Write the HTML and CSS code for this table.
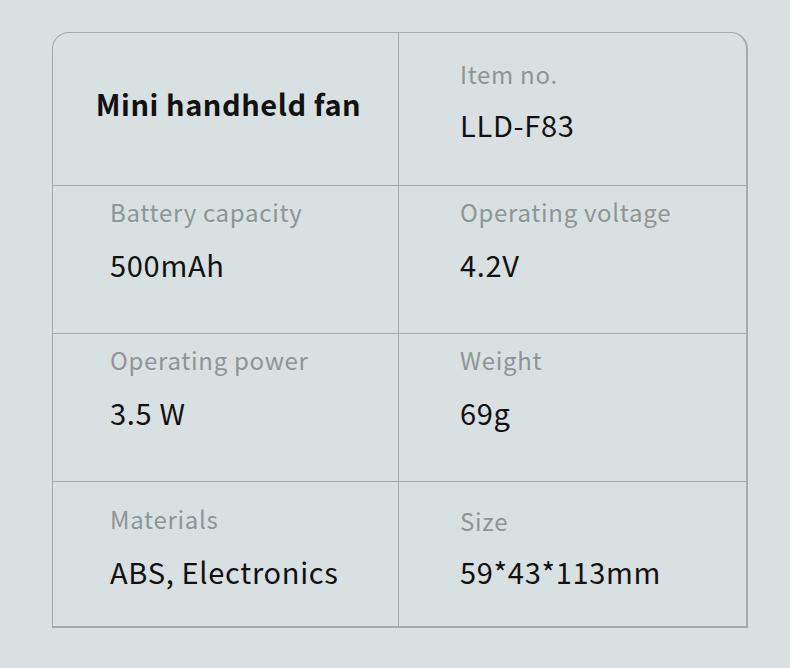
FILE: index.html
```html
<!DOCTYPE html>
<html>
<head>
<meta charset="utf-8">
<link rel="stylesheet" href="styles.css">
</head>
<body>
<div class="card">
  <div class="cell title-cell"><span class="title">Mini handheld fan</span></div>
  <div class="cell r1"><div class="label">Item no.</div><div class="value">LLD-F83</div></div>
  <div class="cell r2"><div class="label">Battery capacity</div><div class="value">500mAh</div></div>
  <div class="cell r2 right"><div class="label">Operating voltage</div><div class="value">4.2V</div></div>
  <div class="cell r3"><div class="label">Operating power</div><div class="value">3.5 W</div></div>
  <div class="cell r3 right"><div class="label">Weight</div><div class="value">69g</div></div>
  <div class="cell r4"><div class="label">Materials</div><div class="value">ABS, Electronics</div></div>
  <div class="cell r4 right"><div class="label">Size</div><div class="value">59*43*113mm</div></div>
</div>
</body>
</html>
```
FILE: styles.css
```css
html, body {
  margin: 0;
  padding: 0;
  background: #d8e0e1;
  font-family: "Noto Sans CJK SC", "Noto Sans", sans-serif;
}
body {
  width: 790px;
  height: 668px;
  overflow: hidden;
}
.card {
  margin: 32px 0 0 52px;
  width: 693px;
  border: 1px solid #a2aaab;
  border-bottom-width: 2px;
  border-right-width: 2px;
  border-radius: 17px 17px 0 0;
  display: grid;
  grid-template-columns: 346px 347px;
  grid-template-rows: 152px 148px 148px 145px;
}
.cell {
  border-top: 1px solid #a2aaab;
  padding-left: 57px;
  box-sizing: border-box;
}
.cell:nth-child(odd) {
  border-right: 1px solid #a2aaab;
}
.cell:nth-child(-n+2) {
  border-top: none;
}
.cell.r1 {
  padding-left: 61px;
  padding-top: 29px;
}
.cell.r1 .value {
  margin-top: 25px;
}
.cell.right {
  padding-left: 61px;
}
.title-cell {
  display: flex;
  align-items: center;
  justify-content: center;
  padding-left: 0;
  padding-bottom: 11px;
}
.title {
  font-size: 29px;
  font-weight: 700;
  letter-spacing: 0.55px;
  color: #111;
  line-height: 1;
  margin-left: 6px;
}
.r2, .r3 {
  padding-top: 14px;
}
.r4 {
  padding-top: 25px;
}
.r4.right {
  padding-top: 27px;
}
.r4.right .value {
  margin-top: 25px;
}
.label {
  font-size: 24px;
  line-height: 23px;
  letter-spacing: 0.7px;
  color: #8e9596;
}
.value {
  margin-top: 27px;
  font-size: 29px;
  line-height: 28px;
  letter-spacing: 0.7px;
  color: #111;
}
```
